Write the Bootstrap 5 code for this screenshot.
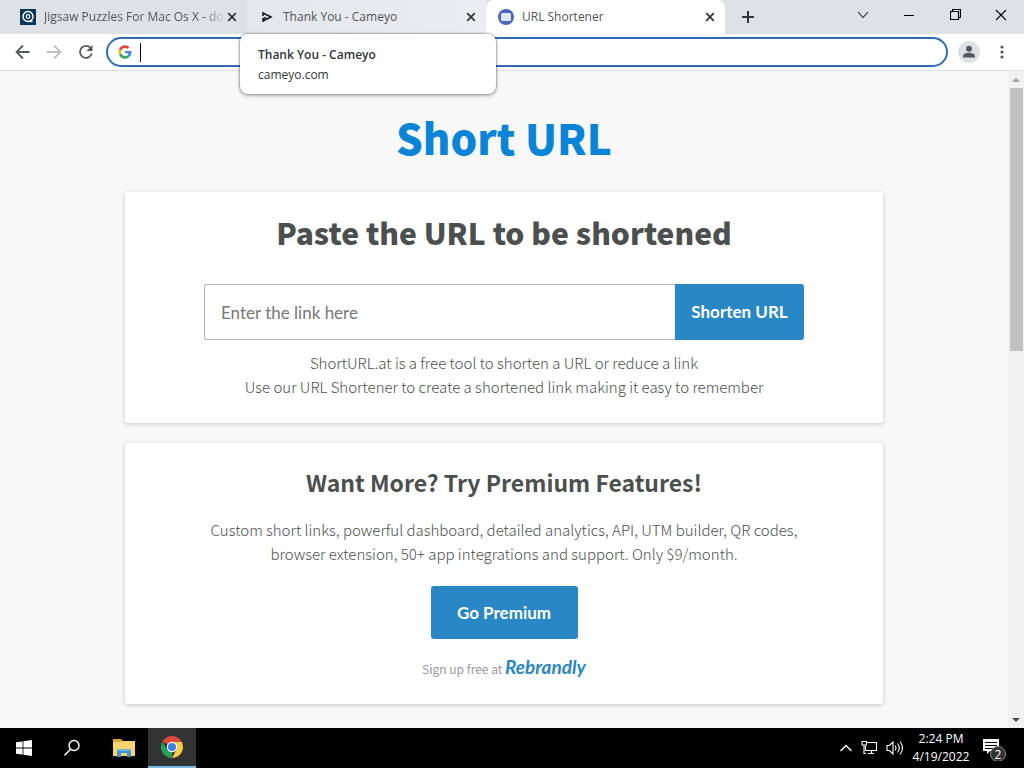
<!DOCTYPE html>
<html lang="en">
<head>
<meta charset="utf-8">
<meta name="viewport" content="width=device-width, initial-scale=1">
<title>URL Shortener</title>
<link href="https://cdn.jsdelivr.net/npm/bootstrap@5.3.0/dist/css/bootstrap.min.css" rel="stylesheet">
<style>
  :root { --brand: #2a87c6; --title: #0a84d6; --ink: #4b4f4e; }
  body { font-family: "Noto Sans CJK SC", "Noto Sans", sans-serif; font-size: 16px; line-height: 24px; color: var(--ink); background: #f8f8f8; }
  button { background: none; border: 0; padding: 0; color: inherit; }
  svg { display: block; flex: none; }

  /* browser frame */
  .browser-ui { font-family: "Open Sans", "Noto Sans", sans-serif; font-size: 12px; line-height: 16px; color: #45484c; }
  .tab-strip { background: #dee1e6; height: 34px; padding-left: 8px; }
  .page-tab { width: 239px; padding: 0 8px 0 12px; }
  .page-tab .tab-name { white-space: nowrap; color: #50545a; }
  .page-tab .tab-fade { margin-right: -8px; -webkit-mask-image: linear-gradient(90deg, #000 88%, transparent); mask-image: linear-gradient(90deg, #000 88%, transparent); }
  .page-tab.hovered { background: linear-gradient(90deg, #e4e7eb, #ebedf0); }
  .page-tab.current { background: #fff; border-radius: 8px 8px 0 0; }
  .win-btn { width: 46px; height: 29px; display: grid; place-items: center; color: #111; }
  .tool-bar { height: 37px; background: #fff; border-bottom: 1px solid #dcdee0; padding: 0 16px 0 14px; }
  .omnibox { height: 30px; border: 2px solid #2f6cb8; border-radius: 15px; background: #fff; padding-left: 10px; }
  .omnibox input { border: 0; outline: 0; background: transparent; min-width: 0; font-size: 14px; padding: 0; }
  .caret-line { width: 1px; height: 19px; background: #000; }
  .avatar-dot { width: 22px; height: 22px; background: #dfe1e6; display: grid; place-items: center; margin: 0 16px 0 10px; }
  .tab-card { top: 34px; left: 240px; width: 256px; height: 60px; padding: 11px 18px; border-radius: 8px; line-height: 20px; background: #fff; box-shadow: 0 0 2px 1px rgba(0,0,0,.28), 0 2px 4px rgba(0,0,0,.2); color: #33363a; z-index: 5; }
  .tab-card strong { font-weight: 600; }

  /* page */
  .site-title { font-size: 42px; line-height: 56px; color: var(--title); font-weight: 900; margin-top: 38px; }
  .wrap { max-width: 758px; }
  .panel { background: #fff; box-shadow: 0 1px 4px rgba(0,0,0,.2); border-radius: 2px; }
  .panel h1 { font-size: 30px; line-height: 40px; font-weight: 900; }
  .panel h2 { font-size: 23px; line-height: 32px; font-weight: 700; }
  .panel p { font-size: 15px; font-weight: 300; }
  .panel-top { margin-top: 27px; padding: 20px 16px 24px; }
  .panel-more { margin-top: 20px; padding: 23px 16px; }
  .panel-more p { margin-top: 20px; }
  .url-form { max-width: 600px; margin-top: 32px; margin-bottom: 11px; }
  .url-form input { height: 56px; min-width: 0; border: 1px solid #b5b5b5; border-right: 0; border-radius: 3px 0 0 3px; padding: 0 16px; font: 17px/24px Lato, sans-serif; }
  .url-form input::placeholder { color: #777; opacity: 1; }
  .solid-btn { background: var(--brand); color: #fff; font: 700 17px/24px Lato, sans-serif; border-radius: 3px; text-decoration: none; }
  .url-form .solid-btn { width: 129px; border-radius: 0 3px 3px 0; }
  .premium-btn { width: 147px; height: 53px; margin-top: 20px; }
  .signup { font-size: 12px; color: #999; margin-top: 16px; }
  .wordmark { font: italic 700 19px/24px Lato, cursive; color: var(--brand); text-decoration: none; }

  .scroll-rail { width: 16px; background: #f1f1f1; }
  .scroll-thumb { width: 13px; height: 263px; background: #c1c1c1; }
  .rail-end { height: 17px; display: grid; place-items: center; }

  /* taskbar */
  .task-bar { height: 40px; background: #000; color: #fff; font: 12px/18px "Open Sans", sans-serif; }
  .task-btn { width: 48px; height: 40px; display: grid; place-items: center; }
  .task-btn.running { background: #333; border-bottom: 2px solid #76b9ed; }
  .tray { padding-right: 16px; }
  .clock { width: 58px; }
  .note-icon { margin-left: 4px; }
</style>
</head>
<body class="vh-100 d-flex flex-column overflow-hidden">

<header class="browser-ui position-relative">
  <div class="tab-strip d-flex">
    <div class="page-tab d-flex align-items-center gap-2">
      <svg width="16" height="16" viewBox="0 0 16 16"><path fill="#0b3557" d="M0 0h16v16H0z"/><circle cx="8" cy="7.500" r="5" fill="none" stroke="#fff" stroke-width="1.400"/><circle cx="8" cy="7.500" r="1.800" fill="none" stroke="#fff" stroke-width="1.200"/><path d="M9 12.500h3.500" stroke="#fff" stroke-width="1.200"/></svg>
      <span class="tab-name tab-fade flex-fill">Jigsaw Puzzles For Mac Os X - do</span>
      <button aria-label="Close tab"><svg width="14" height="14" viewBox="0 0 14 14"><path d="M3.200 3.200l7.600 7.600M10.800 3.200l-7.600 7.600" stroke="#333" stroke-width="1.700"/></svg></button>
    </div>
    <div class="page-tab hovered d-flex align-items-center gap-2">
      <svg width="16" height="16" viewBox="0 0 16 16"><path d="M4 7V4l8 4-8 4V9.800L7 8.300" fill="none" stroke="#111" stroke-width="1.500"/></svg>
      <span class="tab-name flex-fill">Thank You - Cameyo</span>
      <button aria-label="Close tab"><svg width="14" height="14" viewBox="0 0 14 14"><path d="M3.200 3.200l7.600 7.600M10.800 3.200l-7.600 7.600" stroke="#333" stroke-width="1.700"/></svg></button>
    </div>
    <div class="page-tab current d-flex align-items-center gap-2">
      <svg width="16" height="16" viewBox="0 0 16 16"><circle cx="8" cy="8" r="8" fill="#4c67c3"/><rect x="3" y="4" width="10" height="8" rx="1.500" fill="#dce8fb"/></svg>
      <span class="tab-name flex-fill">URL Shortener</span>
      <button aria-label="Close tab"><svg width="14" height="14" viewBox="0 0 14 14"><path d="M3.200 3.200l7.600 7.600M10.800 3.200l-7.600 7.600" stroke="#333" stroke-width="1.700"/></svg></button>
    </div>
    <button class="px-3" aria-label="New tab"><svg width="14" height="14" viewBox="0 0 14 14"><path d="M7 1v12M1 7h12" stroke="#333" stroke-width="2"/></svg></button>
    <div class="ms-auto d-flex">
      <button class="win-btn" aria-label="Search tabs"><svg width="12" height="12" viewBox="0 0 12 12"><path d="M1 3l5 5.500L11 3" fill="none" stroke="#222" stroke-width="1.100"/></svg></button>
      <button class="win-btn" aria-label="Minimize"><svg width="10" height="10" viewBox="0 0 10 10"><path d="M0 5.500h10" stroke="#000"/></svg></button>
      <button class="win-btn" aria-label="Restore"><svg width="11" height="11" viewBox="0 0 11 11"><path d="M.5 2.500h8v8h-8zM2.500 2V.5h8v8H9" fill="none" stroke="#000" stroke-width="1.200"/></svg></button>
      <button class="win-btn" aria-label="Close"><svg width="12" height="12" viewBox="0 0 12 12"><path d="M1 1l10 10M11 1L1 11" stroke="#000" stroke-width="1.100"/></svg></button>
    </div>
  </div>
  <div class="tool-bar d-flex align-items-center">
    <div class="d-flex gap-3 me-2 pe-1">
      <button aria-label="Back"><svg width="16" height="16" viewBox="0 0 16 16"><path d="M15.500 8H3M9 1.500L2.500 8 9 14.500" fill="none" stroke="#55585c" stroke-width="1.800"/></svg></button>
      <button aria-label="Forward"><svg width="16" height="16" viewBox="0 0 16 16"><path d="M1 8h12.500M8 1.500L14.500 8 8 14.500" fill="none" stroke="#bdbfc2" stroke-width="1.800"/></svg></button>
      <button aria-label="Reload"><svg width="16" height="16" viewBox="0 0 16 16"><path d="M12.600 4A6 6 0 1 0 13.800 9.500" fill="none" stroke="#55585c" stroke-width="1.800"/><path d="M14.500 1v6h-6z" fill="#55585c"/></svg></button>
    </div>
    <div class="omnibox flex-fill d-flex align-items-center">
      <svg width="14" height="14" viewBox="0 0 48 48"><path fill="#4285F4" d="M46 24.500c0-1.600-.1-2.800-.4-4H24v8h12.500c-.5 3-2.200 5.500-4.700 7.200l6.900 5.400C43.300 37 46 31.300 46 24.500z"/><path fill="#34A853" d="M24 47c6.200 0 11.500-2 14.700-5.900l-6.900-5.400c-1.900 1.300-4.400 2.200-7.800 2.200-6 0-11.200-4-13-9.500L3.800 34C7.500 41.700 15.100 47 24 47z"/><path fill="#FBBC05" d="M11 28.400a14 14 0 0 1 0-8.800L3.800 14a23 23 0 0 0 0 20z"/><path fill="#EA4335" d="M24 10c4.200 0 7 1.800 8.700 3.400l6.300-6.200C35.400 3.500 30.200 1 24 1 15.100 1 7.500 6.300 3.800 14l7.200 5.600C12.800 14 18 10 24 10z"/></svg>
      <span class="caret-line ms-2"></span>
      <input type="text" class="flex-fill" aria-label="Address bar">
    </div>
    <button class="avatar-dot rounded-circle" aria-label="Profile"><svg width="14" height="14" viewBox="0 0 14 14"><circle cx="7" cy="3.800" r="3" fill="#54585f"/><path fill="#54585f" d="M1 12.500V11c0-2.200 3.500-3.200 6-3.200s6 1 6 3.200v1.500z"/></svg></button>
    <button class="px-1" aria-label="Menu"><svg width="4" height="16" viewBox="0 0 4 16"><g fill="#54585f"><circle cx="2" cy="3" r="1.600"/><circle cx="2" cy="8" r="1.600"/><circle cx="2" cy="13" r="1.600"/></g></svg></button>
  </div>
  <div class="tab-card position-absolute" role="tooltip"><strong class="d-block">Thank You - Cameyo</strong>cameyo.com</div>
</header>

<div class="d-flex flex-fill overflow-hidden">
  <main class="flex-fill text-center overflow-hidden">
    <div class="site-title">Short URL</div>
    <div class="wrap mx-auto">
      <section class="panel panel-top">
        <h1 class="mb-0">Paste the URL to be shortened</h1>
        <form class="url-form mx-auto d-flex">
          <input type="url" class="flex-fill" placeholder="Enter the link here" aria-label="Link to shorten">
          <button type="button" class="solid-btn">Shorten URL</button>
        </form>
        <p class="mb-0">ShortURL.at is a free tool to shorten a URL or reduce a link<br>Use our URL Shortener to create a shortened link making it easy to remember</p>
      </section>
      <section class="panel panel-more">
        <h2 class="mb-0">Want More? Try Premium Features!</h2>
        <p class="mb-0">Custom short links, powerful dashboard, detailed analytics, API, UTM builder, QR codes,<br>browser extension, 50+ app integrations and support. Only $9/month.</p>
        <a href="#" class="solid-btn premium-btn d-inline-flex align-items-center justify-content-center">Go Premium</a>
        <div class="signup">Sign up free at <a href="#" class="wordmark">Rebrandly</a></div>
      </section>
    </div>
  </main>
  <div class="scroll-rail d-flex flex-column align-items-center">
    <div class="rail-end"><svg width="8" height="4" viewBox="0 0 8 4"><path d="M0 4l4-4 4 4z" fill="#a0a0a0"/></svg></div>
    <div class="scroll-thumb"></div>
    <div class="rail-end mt-auto"><svg width="8" height="4" viewBox="0 0 8 4"><path d="M0 0l4 4 4-4z" fill="#505050"/></svg></div>
  </div>
</div>

<footer class="task-bar d-flex align-items-center">
  <button class="task-btn" aria-label="Start"><svg width="16" height="16" viewBox="0 0 16 16"><path fill="#fff" d="M0 2.300l6.600-.9v6.200H0zM7.400 1.200L16 0v7.600H7.400zM0 8.400h6.600v6.200L0 13.700zM7.400 8.400H16V16l-8.600-1.200z"/></svg></button>
  <button class="task-btn" aria-label="Search"><svg width="18" height="18" viewBox="0 0 18 18"><circle cx="11" cy="6.500" r="5" fill="none" stroke="#fff" stroke-width="1.400"/><path d="M7.500 10.200L1.500 16.500" stroke="#fff" stroke-width="1.500"/></svg></button>
  <button class="task-btn ms-1" aria-label="File Explorer"><svg width="22" height="18" viewBox="0 0 22 18"><path fill="#dba733" d="M0 0h8l2 2v4H0z"/><path fill="#fad46a" d="M0 3h8l2-1h12v15H0z"/><path fill="#3f93d4" d="M4 10h14v8h-4v-4H8v4H4z"/><path fill="#68b5ea" d="M4 10h14v2H4z"/></svg></button>
  <button class="task-btn running" aria-label="Chrome"><svg width="24" height="24" viewBox="0 0 48 48"><path fill="#dc4a3e" d="M24 24L4.900 13A22 22 0 0 1 43 13z"/><path fill="#25a15a" d="M24 24L24 46A22 22 0 0 1 4.900 13L14 29z"/><path fill="#f8ce45" d="M24 14h19.600A22 22 0 0 1 24 46l9-17z"/><circle cx="24" cy="24" r="10.500" fill="#fff"/><circle cx="24" cy="24" r="8" fill="#3f7fe8"/></svg></button>
  <div class="tray ms-auto d-flex align-items-center gap-2">
    <svg width="14" height="14" viewBox="0 0 14 14"><path d="M1.500 10L7 4.500l5.500 5.500" fill="none" stroke="#fff" stroke-width="1.400"/></svg>
    <svg width="17" height="16" viewBox="0 0 17 16"><path d="M5.500 2.500h10v8h-11V6M10.500 10.500v3M7 13.500h6M1 1.500h4.500v3.500H1zM3 5v8.500h2" fill="none" stroke="#fff" stroke-width="1.100"/></svg>
    <svg width="18" height="16" viewBox="0 0 18 16"><path d="M1 5.500h2.500L7 2v12l-3.500-3.500H1zM9 5.500q2 2.500 0 5M11.500 3.500q3.500 4.500 0 9M14 1.500q5 6.500 0 13" fill="none" stroke="#fff" stroke-width="1.100"/></svg>
    <div class="clock text-center text-nowrap">2:24 PM<br>4/19/2022</div>
    <svg class="note-icon" width="26" height="26" viewBox="0 0 26 26"><path fill="#fff" d="M1 4h16v12H8l-3 3v-3H1z"/><path d="M3 7.500h12M3 10.500h12M3 13.500h8" stroke="#000"/><circle cx="16" cy="19" r="7.500" fill="#333" stroke="#888"/><text x="16" y="23.500" text-anchor="middle" fill="#fff" font-size="12">2</text></svg>
  </div>
</footer>
<script src="https://cdn.jsdelivr.net/npm/bootstrap@5.3.0/dist/js/bootstrap.bundle.min.js"></script>
</body>
</html>
